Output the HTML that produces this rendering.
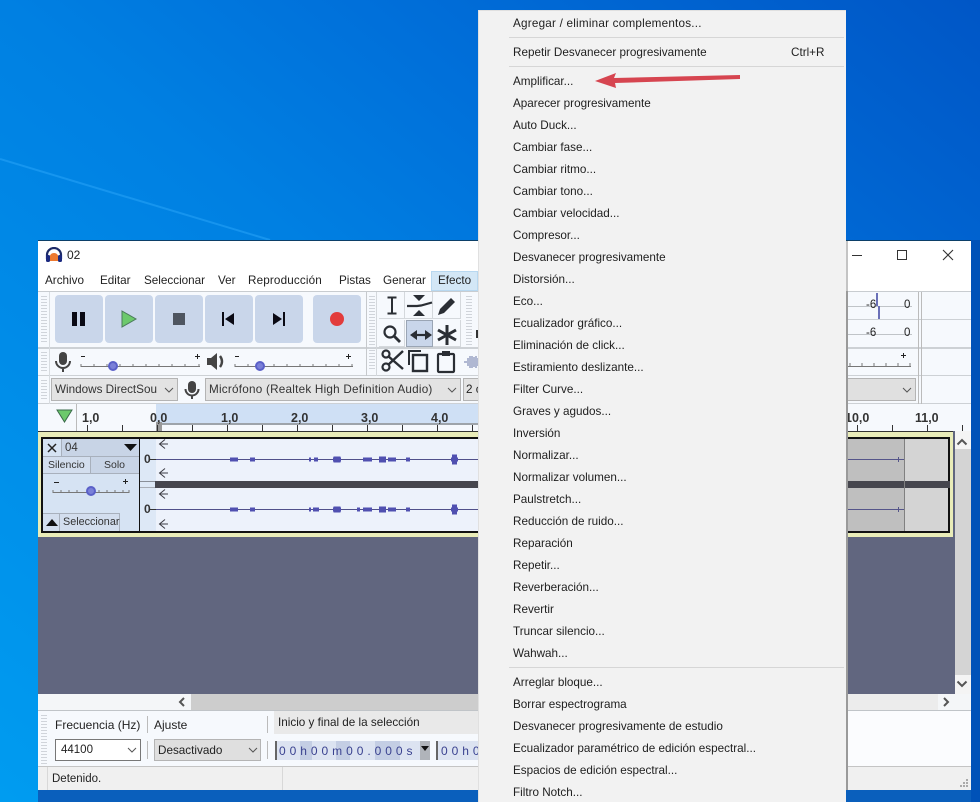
<!DOCTYPE html>
<html><head><meta charset="utf-8"><style>
*{box-sizing:border-box}
html,body{margin:0;padding:0}
body{width:980px;height:802px;overflow:hidden;position:relative;font-family:"Liberation Sans",sans-serif;font-size:12px;color:#222;background:linear-gradient(to top right,#009cf0 0%,#0080e2 50%,#0070da 68%,#0056c6 100%)}
div,span.a,svg{position:absolute}
.t{position:absolute;white-space:nowrap;line-height:16px;height:16px}
.b{background:#c9d6ea;border-radius:4px;width:48px;height:48px;top:295px}
.m{left:0;top:2px}
.m .t{left:513px;font-size:11.7px;color:#1e1e1e}
.r{font-weight:bold;font-size:12.5px;top:410px;color:#333}
.mb{font-size:11.7px}
.tb{border-right:1px solid #d4d8dc;border-bottom:1px solid #d4d8dc}
.g{background:repeating-linear-gradient(#d0d4da 0 1px,transparent 1px 3px)}
</style></head><body>
<svg style="left:0;top:150px" width="300" height="100"><path d="M0 9 L270 90" stroke="#28a4f8" stroke-width="2" fill="none" opacity=".55"/></svg>
<div style="left:971px;top:240px;width:9px;height:562px;background:#0052b8"></div>
<div style="left:38px;top:790px;width:933px;height:12px;background:#0a5fbc"></div>

<!-- window -->
<div style="left:38px;top:240px;width:933px;height:550px;background:#f6f9fd;border-top:1px solid #0c3f68"></div>
<div style="left:38px;top:241px;width:933px;height:50px;background:#fff"></div>
<svg style="left:45px;top:247px" width="18" height="16" viewBox="0 0 18 16"><path d="M4 14q0-8 5-8t5 8z" fill="#ee7a30"/><path d="M2 12V8a7 7 0 0 1 14 0v4" stroke="#1c2a66" stroke-width="2.2" fill="none"/><rect x="1" y="8" width="4" height="7" rx="1.5" fill="#1c2a80"/><rect x="13" y="8" width="4" height="7" rx="1.5" fill="#1c2a80"/></svg>
<span class="t" style="left:67px;top:247px">02</span>
<span class="t mb" style="left:45px;top:273px">Archivo</span>
<span class="t mb" style="left:100px;top:273px">Editar</span>
<span class="t mb" style="left:144px;top:273px">Seleccionar</span>
<span class="t mb" style="left:218px;top:273px">Ver</span>
<span class="t mb" style="left:248px;top:273px;letter-spacing:.15px">Reproducción</span>
<span class="t mb" style="left:339px;top:273px">Pistas</span>
<span class="t mb" style="left:383px;top:273px">Generar</span>
<div style="left:431px;top:271px;width:47px;height:20px;background:#d3e7f6;border:1px solid #b8d8f0"></div>
<span class="t mb" style="left:438px;top:273px">Efecto</span>
<svg style="left:851px;top:249px" width="110" height="14"><path d="M1 6.500H11" stroke="#333"/><rect x="46.500" y="1.500" width="9" height="9" fill="none" stroke="#333"/><path d="M92 1L102 11M102 1L92 11" stroke="#333" stroke-width="1.100"/></svg>

<!-- toolbar lines -->
<div style="left:38px;top:291px;width:933px;height:1px;background:#c8ccd0"></div>
<div style="left:38px;top:347px;width:933px;height:2px;background:#cdd1d5"></div>
<div style="left:38px;top:375px;width:933px;height:1px;background:#cdd1d5"></div>
<div style="left:38px;top:403px;width:933px;height:1px;background:#cdd1d5"></div>
<div style="left:846px;top:319px;width:125px;height:1px;background:#cdd1d5"></div>
<div style="left:49px;top:292px;width:1px;height:112px;background:#d8dce0"></div>
<div style="left:366px;top:292px;width:1px;height:84px;background:#c6c9cc"></div>
<div style="left:376px;top:292px;width:1px;height:84px;background:#d4d8dc"></div>
<div class="g" style="left:41px;top:296px;width:6px;height:46px"></div>
<div class="g" style="left:41px;top:352px;width:6px;height:20px"></div>
<div class="g" style="left:41px;top:380px;width:6px;height:20px"></div>
<div class="g" style="left:369px;top:296px;width:6px;height:74px"></div>
<div class="g" style="left:466px;top:296px;width:6px;height:50px"></div>

<!-- transport -->
<div class="b" style="left:55px"></div>
<div class="b" style="left:105px"></div>
<div class="b" style="left:155px"></div>
<div class="b" style="left:205px"></div>
<div class="b" style="left:255px"></div>
<div class="b" style="left:313px"></div>
<div style="left:72px;top:312px;width:5px;height:14px;background:#0a0a14"></div>
<div style="left:80px;top:312px;width:5px;height:14px;background:#0a0a14"></div>
<svg style="left:120px;top:310px" width="20" height="18"><path d="M2 1L16 9L2 17Z" fill="#6cc96c" stroke="#4a7a5a"/></svg>
<div style="left:173px;top:313px;width:12px;height:12px;background:#4e5560"></div>
<svg style="left:221px;top:312px" width="14" height="14"><path d="M1 0h2v14H1zM13 1v12L4 7z" fill="#0a0a14"/></svg>
<svg style="left:272px;top:312px" width="14" height="14"><path d="M11 0h2v14h-2zM1 1v12l9-6z" fill="#0a0a14"/></svg>
<div style="left:330px;top:312px;width:14px;height:14px;background:#e23c3c;border-radius:50%"></div>

<!-- tools -->
<div style="left:379px;top:292px;width:26px;height:27px" class="tb"></div>
<div style="left:405px;top:292px;width:28px;height:27px" class="tb"></div>
<div style="left:433px;top:292px;width:28px;height:27px" class="tb"></div>
<div style="left:379px;top:320px;width:26px;height:27px" class="tb"></div>
<div style="left:406px;top:320px;width:27px;height:27px;background:#c9d6ea;border:1px solid #9aa5b4"></div>
<div style="left:433px;top:320px;width:28px;height:27px" class="tb"></div>
<svg style="left:379px;top:292px" width="90" height="84" viewBox="0 0 90 84" fill="none" stroke="#2a2e34">
<path d="M8.500 5.500h9M8.500 21.500h9M13 5v17" stroke-width="2"/>
<path d="M28 14h10l4-.5 11-3" stroke-width="2.200"/><path d="M34 3h12l-6 6zM34 24h12l-6-6z" fill="#2a2e34" stroke="none"/>
<path d="M59 23l2-6 11-11 4 4-11 11z" fill="#2a2e34" stroke="none"/>
<circle cx="11" cy="40" r="5.500" stroke-width="2.200"/><path d="M15 44l6 6" stroke-width="2.800"/>
<path d="M34 43h16" stroke-width="2.200"/><path d="M38 38l-7 5 7 5zM46 38l7 5-7 5z" fill="#2a2e34" stroke="none"/>
<path d="M68 33v20M59 38l18 10M77 38l-18 10" stroke-width="3"/>
<circle cx="7" cy="75" r="3.500" stroke-width="2.200"/><circle cx="7" cy="62" r="3.500" stroke-width="2.200"/><path d="M9 64l15 13M9 73l15-14" stroke-width="2.400"/>
<path d="M30 73V59h12" stroke-width="2"/><rect x="34" y="63" width="14" height="16" stroke-width="2.400"/>
<rect x="59" y="62" width="16" height="18" rx="1" stroke-width="2.200"/><rect x="63" y="59" width="8" height="5" fill="#2a2e34" stroke="none"/>
</svg>
<svg style="left:464px;top:354px" width="15" height="16" stroke="#6a78a8" fill="none"><path d="M0 8h3M4 4v8M6 2v12M8 2v12M10 3v10M12 2v12M14 4v8"/></svg>
<div style="left:476px;top:330px;width:3px;height:8px;background:#333"></div>

<!-- mic and volume sliders -->
<svg style="left:54px;top:351px" width="18" height="24"><rect x="5" y="1" width="8" height="13" rx="4" fill="#444"/><path d="M2 10a7 7 0 0 0 14 0M9 17v4" stroke="#444" stroke-width="2" fill="none"/></svg>
<svg style="left:206px;top:352px" width="20" height="20"><path d="M1 6h4l6-5v17l-6-5H1z" fill="#444"/><path d="M14 4q4 5.500 0 11" stroke="#444" stroke-width="2.400" fill="none"/></svg>
<svg style="left:80px;top:352px" width="125" height="20" fill="none" stroke="#777"><path d="M1 4.500h4" stroke="#222"/><path d="M115 4.500h5M117.500 2v5" stroke="#222"/><path d="M1 14.500h119M1 12v3M14 12v3M27 12v3M40 12v3M53 12v3M66 12v3M79 12v3M92 12v3M105 12v3M119 12v3"/><circle cx="33" cy="14" r="4" fill="#7a80d8" stroke="#5a60c8" stroke-width="2"/></svg>
<svg style="left:234px;top:352px" width="125" height="20" fill="none" stroke="#777"><path d="M1 4.500h4" stroke="#222"/><path d="M112 4.500h5M114.500 2v5" stroke="#222"/><path d="M1 14.500h118M1 12v3M14 12v3M27 12v3M40 12v3M53 12v3M66 12v3M79 12v3M92 12v3M105 12v3M118 12v3"/><circle cx="26" cy="14" r="4" fill="#7a80d8" stroke="#5a60c8" stroke-width="2"/></svg>

<!-- device row -->
<div style="left:51px;top:378px;width:127px;height:23px;background:#e3e3e3;border:1px solid #b4b4b4"></div>
<span class="t" style="left:55px;top:382px;font-size:11.700px;color:#333">Windows DirectSou</span>
<svg style="left:164px;top:387px" width="10" height="6"><path d="M1 1l4 4 4-4" stroke="#555" fill="none"/></svg>
<svg style="left:184px;top:380px" width="16" height="21"><rect x="4" y="1" width="8" height="12" rx="4" fill="#444"/><path d="M1.500 9a6.500 6.500 0 0 0 13 0M8 16v3" stroke="#444" stroke-width="2" fill="none"/></svg>
<div style="left:205px;top:378px;width:256px;height:23px;background:#e3e3e3;border:1px solid #b4b4b4"></div>
<span class="t" style="left:209px;top:382px;font-size:11.700px;letter-spacing:.24px;color:#333">Micrófono (Realtek High Definition Audio)</span>
<svg style="left:447px;top:387px" width="10" height="6"><path d="M1 1l4 4 4-4" stroke="#555" fill="none"/></svg>
<div style="left:463px;top:378px;width:16px;height:23px;background:#e3e3e3;border:1px solid #b4b4b4"></div>
<span class="t" style="left:466px;top:382px;font-size:11.700px">2 c</span>
<div style="left:846px;top:378px;width:70px;height:23px;background:#e0e0e0;border:1px solid #b4b4b4;border-left:0"></div>
<svg style="left:902px;top:387px" width="10" height="6"><path d="M1 1l4 4 4-4" stroke="#555" fill="none"/></svg>

<!-- right toolbar remains -->
<div style="left:918px;top:292px;width:4px;height:112px;border-left:1px solid #bbb;border-right:1px solid #bbb"></div>
<div style="left:846px;top:306px;width:66px;height:1px;background:#c0c4c8"></div>
<div style="left:846px;top:334px;width:66px;height:1px;background:#c0c4c8"></div>
<div style="left:876px;top:293px;width:2px;height:13px;background:#6a70b8"></div>
<div style="left:878px;top:306px;width:2px;height:13px;background:#6a70b8"></div>
<span class="t" style="left:866px;top:297px;font-size:11.500px">-6</span>
<span class="t" style="left:904px;top:297px;font-size:11.500px">0</span>
<span class="t" style="left:866px;top:325px;font-size:11.500px">-6</span>
<span class="t" style="left:904px;top:325px;font-size:11.500px">0</span>
<svg style="left:846px;top:352px" width="68" height="20" stroke="#777" fill="none"><path d="M0 14.500h65M64 14v-3M52 14v-3M40 14v-3M28 14v-3M16 14v-3M4 14v-3"/><path d="M55 3.500h5M57.500 1v5" stroke="#222"/></svg>

<!-- ruler -->
<div style="left:38px;top:404px;width:933px;height:27px;background:#f6f9fd"></div>
<div style="left:156px;top:404px;width:322px;height:19px;background:#cfe0f5"></div>
<div style="left:162px;top:423px;width:316px;height:2px;background:#9ea4aa"></div>
<div style="left:76px;top:404px;width:1px;height:27px;background:#bbb"></div>
<svg style="left:56px;top:409px" width="18" height="15"><path d="M1 1h15L8.500 13z" fill="#6cc96c" stroke="#3a6a4a"/></svg>
<div style="left:156px;top:422px;width:6px;height:9px;background:#999"></div>
<span class="t r" style="left:82px">1,0</span>
<span class="t r" style="left:150px">0,0</span>
<span class="t r" style="left:221px">1,0</span>
<span class="t r" style="left:291px">2,0</span>
<span class="t r" style="left:361px">3,0</span>
<span class="t r" style="left:431px">4,0</span>
<span class="t r" style="left:845px">10,0</span>
<span class="t r" style="left:915px">11,0</span>
<svg style="left:38px;top:425px" width="933" height="6" stroke="#333"><path d="M49.500 0v6M84.500 0v6M119.500 0v6M154.500 0v6M189.500 0v6M224.500 0v6M259.500 0v6M294.500 0v6M329.500 0v6M364.500 0v6M399.500 0v6M434.500 0v6M819.500 0v6M854.500 0v6M889.500 0v6M924.500 0v6"/></svg>

<!-- track area -->
<div style="left:38px;top:431px;width:917px;height:263px;background:#61667f"></div>
<div style="left:955px;top:431px;width:16px;height:263px;background:#d4d4d4"></div>
<div style="left:955px;top:431px;width:16px;height:18px;background:#f4f4f4"></div>
<div style="left:955px;top:675px;width:16px;height:19px;background:#f4f4f4"></div>
<svg style="left:956px;top:438px" width="12" height="8"><path d="M1.500 6.500L6 2l4.500 4.500" stroke="#555" stroke-width="2" fill="none"/></svg>
<svg style="left:956px;top:680px" width="12" height="8"><path d="M1.500 1.500L6 6l4.500-4.500" stroke="#555" stroke-width="2" fill="none"/></svg>
<div style="left:38px;top:431px;width:915px;height:106px;background:#e9ecb8"></div>
<div style="left:38px;top:431px;width:915px;height:1px;background:#333"></div>
<div style="left:41px;top:437px;width:909px;height:96px;background:#111"></div>
<div style="left:43px;top:439px;width:96px;height:92px;background:#d6e3f3"></div>
<div style="left:140px;top:439px;width:16px;height:92px;background:#dde8f6"></div>
<div style="left:140px;top:481px;width:16px;height:1px;background:#8a8f98"></div>
<div style="left:140px;top:487px;width:16px;height:1px;background:#a8adb6"></div>
<div style="left:155px;top:481px;width:795px;height:7px;background:#46464e"></div>
<div style="left:156px;top:439px;width:322px;height:42px;background:#edf2fb"></div>
<div style="left:156px;top:488px;width:322px;height:43px;background:#edf2fb"></div>
<div style="left:846px;top:439px;width:58px;height:42px;background:#bfbfbf"></div>
<div style="left:846px;top:488px;width:58px;height:43px;background:#bfbfbf"></div>
<div style="left:905px;top:439px;width:43px;height:42px;background:#d4d4d4"></div>
<div style="left:905px;top:488px;width:43px;height:43px;background:#d4d4d4"></div>
<div style="left:904px;top:439px;width:1px;height:92px;background:#808080"></div>
<div style="left:846px;top:459px;width:58px;height:1px;background:#55558a"></div>
<div style="left:846px;top:509px;width:58px;height:1px;background:#55558a"></div>
<div style="left:898px;top:457px;width:1px;height:5px;background:#55558a"></div>
<div style="left:898px;top:507px;width:1px;height:5px;background:#55558a"></div>
<!-- track panel -->
<div style="left:43px;top:439px;width:96px;height:18px;border-bottom:1px solid #a8b0bc"></div>
<div style="left:61px;top:439px;width:78px;height:18px;background:#c8d4e6;border-left:1px solid #a8b0bc;border-bottom:1px solid #a8b0bc"></div>
<svg style="left:47px;top:443px" width="11" height="11"><path d="M1 1l8 8M9 1l-8 8" stroke="#222" stroke-width="1.500"/></svg>
<span class="t" style="left:65px;top:440px;font-size:11.500px;color:#333">04</span>
<svg style="left:124px;top:444px" width="13" height="8"><path d="M0 0h13L6.500 7z" fill="#111"/></svg>
<div style="left:43px;top:457px;width:48px;height:17px;background:#d3deee;border-right:1px solid #a8b0bc;border-bottom:1px solid #a8b0bc"></div>
<div style="left:91px;top:457px;width:48px;height:17px;background:#c8d4e6;border-bottom:1px solid #a8b0bc"></div>
<span class="t" style="left:48px;top:457px;font-size:10.500px;color:#333">Silencio</span>
<span class="t" style="left:104px;top:457px;font-size:10.500px;color:#333">Solo</span>
<svg style="left:52px;top:476px" width="80" height="22" fill="none" stroke="#777"><path d="M2 6.500h5" stroke="#222"/><path d="M71 5.500h5M73.500 3v5" stroke="#222"/><path d="M1 16.500h76M1 14v3M9 14v3M17 14v3M25 14v3M47 14v3M55 14v3M63 14v3M71 14v3M77 14v3"/><circle cx="39" cy="15" r="4" fill="#7a80d8" stroke="#5a60c8" stroke-width="2"/></svg>
<div style="left:43px;top:513px;width:17px;height:18px;background:#d3deee;border-right:1px solid #a8b0bc;border-top:1px solid #a8b0bc"></div>
<div style="left:60px;top:513px;width:60px;height:18px;background:#d3deee;border-right:1px solid #a8b0bc;border-top:1px solid #a8b0bc"></div>
<svg style="left:46px;top:519px" width="12" height="8"><path d="M0 7h12L6 0z" fill="#111"/></svg>
<span class="t" style="left:63px;top:514px;font-size:10.800px;color:#333">Seleccionar</span>
<span class="t" style="left:144px;top:451px;font-weight:bold;font-size:12px;color:#333">0</span>
<span class="t" style="left:144px;top:501px;font-weight:bold;font-size:12px;color:#333">0</span>
<div style="left:150px;top:459px;width:6px;height:1px;background:#333"></div>
<div style="left:150px;top:509px;width:6px;height:1px;background:#333"></div>
<svg style="left:156px;top:439px" width="322" height="92" fill="none" stroke="#3c3c44">
<path d="M9 0.500L3.500 5 9 9.500M4 5h8M9 29.500L3.500 34 9 38.500M4 34h8M9 50.500L3.500 55 9 59.500M4 55h8M9 80.500L3.500 85 9 89.500M4 85h8"/>
<path d="M0 20.500h322M0 70.500h322" stroke="#50508a"/>
<g stroke="#5050b0" stroke-width="4"><path d="M74 20.500h8M94 20.500h5M153 20.500h2M158 20.500h4M177 20.500h8M207 20.500h9M223 20.500h7M232 20.500h8M250 20.500h4M295 20.500h7M74 70.500h8M94 70.500h5M153 70.500h2M157 70.500h6M177 70.500h8M201 70.500h3M207 70.500h9M223 70.500h7M232 70.500h8M250 70.500h4M295 70.500h7"/></g>
<g stroke="#5050b0" stroke-width="5"><path d="M298.500 15.500v10M298.500 65.500v10"/></g>
<g stroke="#5050b0" stroke-width="7"><path d="M226.500 17.500v6M226.500 67.500v6M181 17.500v6M181 67.500v6"/></g>
</svg>

<!-- bottom scrollbar -->
<div style="left:38px;top:694px;width:933px;height:17px;background:#f4f6f8"></div>
<div style="left:191px;top:694px;width:287px;height:17px;background:#cdcdcd"></div>
<div style="left:846px;top:694px;width:92px;height:17px;background:#ececec"></div>
<svg style="left:177px;top:696px" width="10" height="12"><path d="M7 2L3 6l4 4" stroke="#555" stroke-width="2" fill="none"/></svg>
<svg style="left:941px;top:696px" width="10" height="12"><path d="M3 2l4 4-4 4" stroke="#555" stroke-width="2" fill="none"/></svg>
<div style="left:38px;top:710px;width:933px;height:1px;background:#c0c4c8"></div>

<!-- selection bar -->
<div class="g" style="left:41px;top:715px;width:6px;height:50px"></div>
<span class="t" style="left:55px;top:717px">Frecuencia (Hz)</span>
<div style="left:147px;top:716px;width:1px;height:17px;background:#bbb"></div>
<span class="t" style="left:154px;top:717px">Ajuste</span>
<div style="left:267px;top:716px;width:1px;height:17px;background:#bbb"></div>
<div style="left:274px;top:711px;width:204px;height:23px;background:#e9e9e9"></div>
<span class="t" style="left:278px;top:715px;font-size:11.700px">Inicio y final de la selección</span>
<div style="left:55px;top:739px;width:86px;height:22px;background:#fff;border:1px solid #777"></div>
<span class="t" style="left:61px;top:742px;font-size:11.500px">44100</span>
<svg style="left:127px;top:747px" width="10" height="6"><path d="M1 1l4 4 4-4" stroke="#555" fill="none"/></svg>
<div style="left:147px;top:741px;width:1px;height:18px;background:#bbb"></div>
<div style="left:154px;top:739px;width:107px;height:22px;background:#dfdfdf;border:1px solid #b4b4b4"></div>
<span class="t" style="left:158px;top:743px;font-size:11.700px">Desactivado</span>
<svg style="left:248px;top:747px" width="10" height="6"><path d="M1 1l4 4 4-4" stroke="#555" fill="none"/></svg>
<div style="left:267px;top:741px;width:1px;height:18px;background:#bbb"></div>
<div style="left:275px;top:741px;width:155px;height:19px;background:#dce3f1;border-left:2px solid #666"></div>
<div style="left:300px;top:741px;width:12px;height:19px;background:#c4cee4"></div>
<div style="left:336px;top:741px;width:14px;height:19px;background:#c4cee4"></div>
<div style="left:375px;top:741px;width:25px;height:19px;background:#c4cee4"></div>
<div style="left:420px;top:741px;width:10px;height:19px;background:#b0b4ba"></div>
<span class="t" style="left:279px;top:743px;font-size:12px;color:#3a4290;letter-spacing:3.950px">00h00m00.000s</span>
<svg style="left:421px;top:746px" width="8" height="5"><path d="M0 0h8L4 5z" fill="#111"/></svg>
<div style="left:436px;top:741px;width:42px;height:19px;background:#dce3f1;border-left:2px solid #666"></div>
<span class="t" style="left:441px;top:743px;font-size:12px;color:#3a4290;letter-spacing:3.950px">00h0</span>
<div style="left:846px;top:711px;width:125px;height:55px;background:#fbfcfe"></div>

<!-- status bar -->
<div style="left:38px;top:766px;width:933px;height:24px;background:#f0f0f0;border-top:1px solid #c4c4c4"></div>
<div style="left:47px;top:767px;width:1px;height:23px;background:#d8d8d8"></div>
<div style="left:282px;top:767px;width:1px;height:23px;background:#d8d8d8"></div>
<span class="t" style="left:52px;top:771px;font-size:11.500px">Detenido.</span>
<svg style="left:959px;top:778px" width="10" height="10" fill="#aaa"><path d="M7 1h2v2H7zM4 4h2v2H4zM7 4h2v2H7zM1 7h2v2H1zM4 7h2v2H4zM7 7h2v2H7z"/></svg>

<!-- menu -->
<div style="left:478px;top:10px;width:368px;height:792px;background:#f2f2f2;border-left:1px solid #e0e0e0;border-top:1px solid #e0e0e0"></div>
<div style="left:846px;top:241px;width:2px;height:50px;background:#c4c4c4"></div>
<div style="left:846px;top:291px;width:2px;height:499px;background:#9a9a9a"></div>
<div style="left:509px;top:37px;width:335px;height:1px;background:#d6d6d6"></div>
<div style="left:509px;top:66px;width:335px;height:1px;background:#d6d6d6"></div>
<div style="left:509px;top:667px;width:335px;height:1px;background:#d6d6d6"></div>
<div class="m">
<span class="t" style="top:14px;letter-spacing:.22px">Agregar / eliminar complementos...</span>
<span class="t" style="top:43px">Repetir Desvanecer progresivamente</span>
<span class="t" style="top:43px;left:791px">Ctrl+R</span>
<span class="t" style="top:72px">Amplificar...</span>
<span class="t" style="top:94px">Aparecer progresivamente</span>
<span class="t" style="top:116px">Auto Duck...</span>
<span class="t" style="top:138px">Cambiar fase...</span>
<span class="t" style="top:160px">Cambiar ritmo...</span>
<span class="t" style="top:182px">Cambiar tono...</span>
<span class="t" style="top:204px">Cambiar velocidad...</span>
<span class="t" style="top:226px">Compresor...</span>
<span class="t" style="top:248px">Desvanecer progresivamente</span>
<span class="t" style="top:270px">Distorsión...</span>
<span class="t" style="top:292px">Eco...</span>
<span class="t" style="top:314px">Ecualizador gráfico...</span>
<span class="t" style="top:336px">Eliminación de click...</span>
<span class="t" style="top:358px">Estiramiento deslizante...</span>
<span class="t" style="top:380px">Filter Curve...</span>
<span class="t" style="top:402px">Graves y agudos...</span>
<span class="t" style="top:424px">Inversión</span>
<span class="t" style="top:446px">Normalizar...</span>
<span class="t" style="top:468px">Normalizar volumen...</span>
<span class="t" style="top:490px">Paulstretch...</span>
<span class="t" style="top:512px">Reducción de ruido...</span>
<span class="t" style="top:534px">Reparación</span>
<span class="t" style="top:556px">Repetir...</span>
<span class="t" style="top:578px">Reverberación...</span>
<span class="t" style="top:600px">Revertir</span>
<span class="t" style="top:622px">Truncar silencio...</span>
<span class="t" style="top:644px">Wahwah...</span>
<span class="t" style="top:673px">Arreglar bloque...</span>
<span class="t" style="top:695px">Borrar espectrograma</span>
<span class="t" style="top:717px">Desvanecer progresivamente de estudio</span>
<span class="t" style="top:739px">Ecualizador paramétrico de edición espectral...</span>
<span class="t" style="top:761px">Espacios de edición espectral...</span>
<span class="t" style="top:783px">Filtro Notch...</span>
</div>
<svg style="left:590px;top:68px" width="155" height="24"><path d="M5 13L26 5L24 10L150 7L150 11L25 15L26 20Z" fill="#d64550"/></svg>
</body></html>
